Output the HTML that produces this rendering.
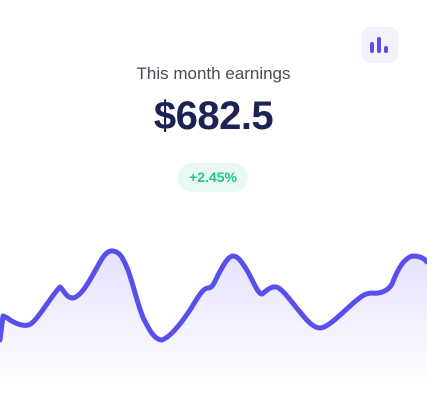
<!DOCTYPE html>
<html><head><style>
html,body{margin:0;padding:0;background:#fff;width:427px;height:420px;overflow:hidden;font-family:"Liberation Sans",sans-serif;position:relative}
.icon{position:absolute;left:362px;top:27px;width:36px;height:36px;border-radius:8px;background:#f1f2fe}
.bar{position:absolute;width:4px;border-radius:2px;background:#5b4ee8;bottom:10px}
.t1{position:absolute;left:0;width:427px;text-align:center;top:64px;font-size:17px;color:#4a4a55}
.t2{position:absolute;left:0;width:427px;text-align:center;top:94px;font-size:40px;font-weight:bold;color:#1d2254;letter-spacing:-0.5px}
.badge{position:absolute;left:178px;top:163px;width:70px;height:29px;border-radius:15px;background:#e8f9f3;color:#22c38e;font-size:14px;font-weight:bold;text-align:center;line-height:29px}
svg{position:absolute;left:0;top:0}
</style></head><body>
<div class="icon">
<div class="bar" style="left:8px;height:11px"></div>
<div class="bar" style="left:15px;height:16px"></div>
<div class="bar" style="left:22px;height:7px"></div>
</div>
<div class="t1">This month earnings</div>
<div class="t2">$682.5</div>
<div class="badge">+2.45%</div>
<svg width="427" height="420">
<defs><linearGradient id="g" gradientUnits="userSpaceOnUse" x1="0" y1="250" x2="0" y2="385"><stop offset="0" stop-color="#e4e1fc"/><stop offset="1" stop-color="#ffffff"/></linearGradient></defs>
<path d="M0,340 L3,316 Q8,318 10,320 C18,325 28,328 33,322 C40,316 52,295 60,287 C64,290 66,298 73,298 C82,296 90,280 100,262 C104,255 108,250 113,251 C120,252 123,258 128,270 C135,290 140,315 147,325 C152,335 157,340 162,340 C170,337 180,325 190,310 C198,297 203,288 208,288 C212,288 214,284 218,275 C223,266 228,256 233,256 C238,256 242,262 248,272 C254,283 258,294 262,294 C266,291 271,286 276,287 C282,288 290,300 300,312 C308,322 314,328 320,328 C326,328 335,320 350,306 C360,297 365,293 372,293 C380,294 388,291 392,284 C398,268 405,257 413,256 C420,256 424,258 427,262 L427,420 L0,420 Z" fill="url(#g)"/>
<path d="M0,340 L3,316 Q8,318 10,320 C18,325 28,328 33,322 C40,316 52,295 60,287 C64,290 66,298 73,298 C82,296 90,280 100,262 C104,255 108,250 113,251 C120,252 123,258 128,270 C135,290 140,315 147,325 C152,335 157,340 162,340 C170,337 180,325 190,310 C198,297 203,288 208,288 C212,288 214,284 218,275 C223,266 228,256 233,256 C238,256 242,262 248,272 C254,283 258,294 262,294 C266,291 271,286 276,287 C282,288 290,300 300,312 C308,322 314,328 320,328 C326,328 335,320 350,306 C360,297 365,293 372,293 C380,294 388,291 392,284 C398,268 405,257 413,256 C420,256 424,258 427,262" fill="none" stroke="#5850ec" stroke-width="5" stroke-linecap="round" stroke-linejoin="round"/>
</svg>
</body></html>
